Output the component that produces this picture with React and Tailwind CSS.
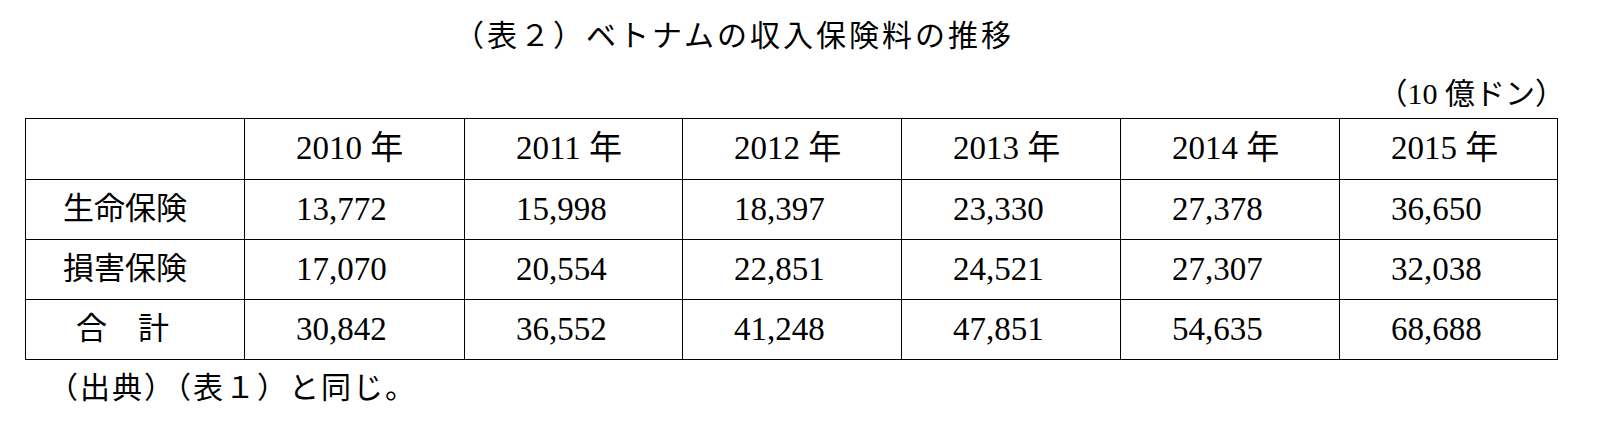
export default function App() {
  const years = ["2010", "2011", "2012", "2013", "2014", "2015"];
  const rows = [
    { label: "生命保険", pad: "pl-[37px]", values: ["13,772", "15,998", "18,397", "23,330", "27,378", "36,650"] },
    { label: "損害保険", pad: "pl-[37px]", values: ["17,070", "20,554", "22,851", "24,521", "27,307", "32,038"] },
    { label: "合　計", pad: "pl-[50px]", values: ["30,842", "36,552", "41,248", "47,851", "54,635", "68,688"] },
  ];
  const widths = ["w-[219px]", "w-[220px]", "w-[218px]", "w-[219px]", "w-[219px]", "w-[219px]", "w-[218px]"];

  return (
    <div
      className="w-[1597px] h-[425px] bg-white text-black overflow-hidden"
      style={{ fontFamily: '"Liberation Serif", "Noto Sans CJK JP", serif' }}
    >
      {/* title */}
      <div className="pt-[17px] pl-[454px] text-[30px] leading-[38px] tracking-[3px]">
        （表２）ベトナムの収入保険料の推移
      </div>

      {/* unit */}
      <div className="mt-[23px] pr-[32px] text-right text-[30px] leading-[32px]">
        （10 億ドン）
      </div>

      {/* table */}
      <div className="ml-[25px] mt-[8px]">
        <table className="border-collapse table-fixed w-[1532px] text-[33px]">
          <colgroup>
            {widths.map((w, i) => (
              <col key={i} className={w} />
            ))}
          </colgroup>
          <tbody>
            <tr className="h-[61px]">
              <td className="border border-black"></td>
              {years.map((y) => (
                <td key={y} className="border border-black pl-[51px] align-middle whitespace-nowrap">
                  {y} 年
                </td>
              ))}
            </tr>
            {rows.map((r) => (
              <tr key={r.label} className="h-[60px]">
                <td className={`border border-black align-middle whitespace-nowrap text-[31px] ${r.pad}`}>
                  {r.label}
                </td>
                {r.values.map((v, i) => (
                  <td key={i} className="border border-black pl-[51px] align-middle whitespace-nowrap">
                    {v}
                  </td>
                ))}
              </tr>
            ))}
          </tbody>
        </table>
      </div>

      {/* source */}
      <div className="pl-[48px] mt-[10px] text-[30px] leading-[36px] tracking-[2px]">
        （出典）（表１）と同じ。
      </div>
    </div>
  );
}
